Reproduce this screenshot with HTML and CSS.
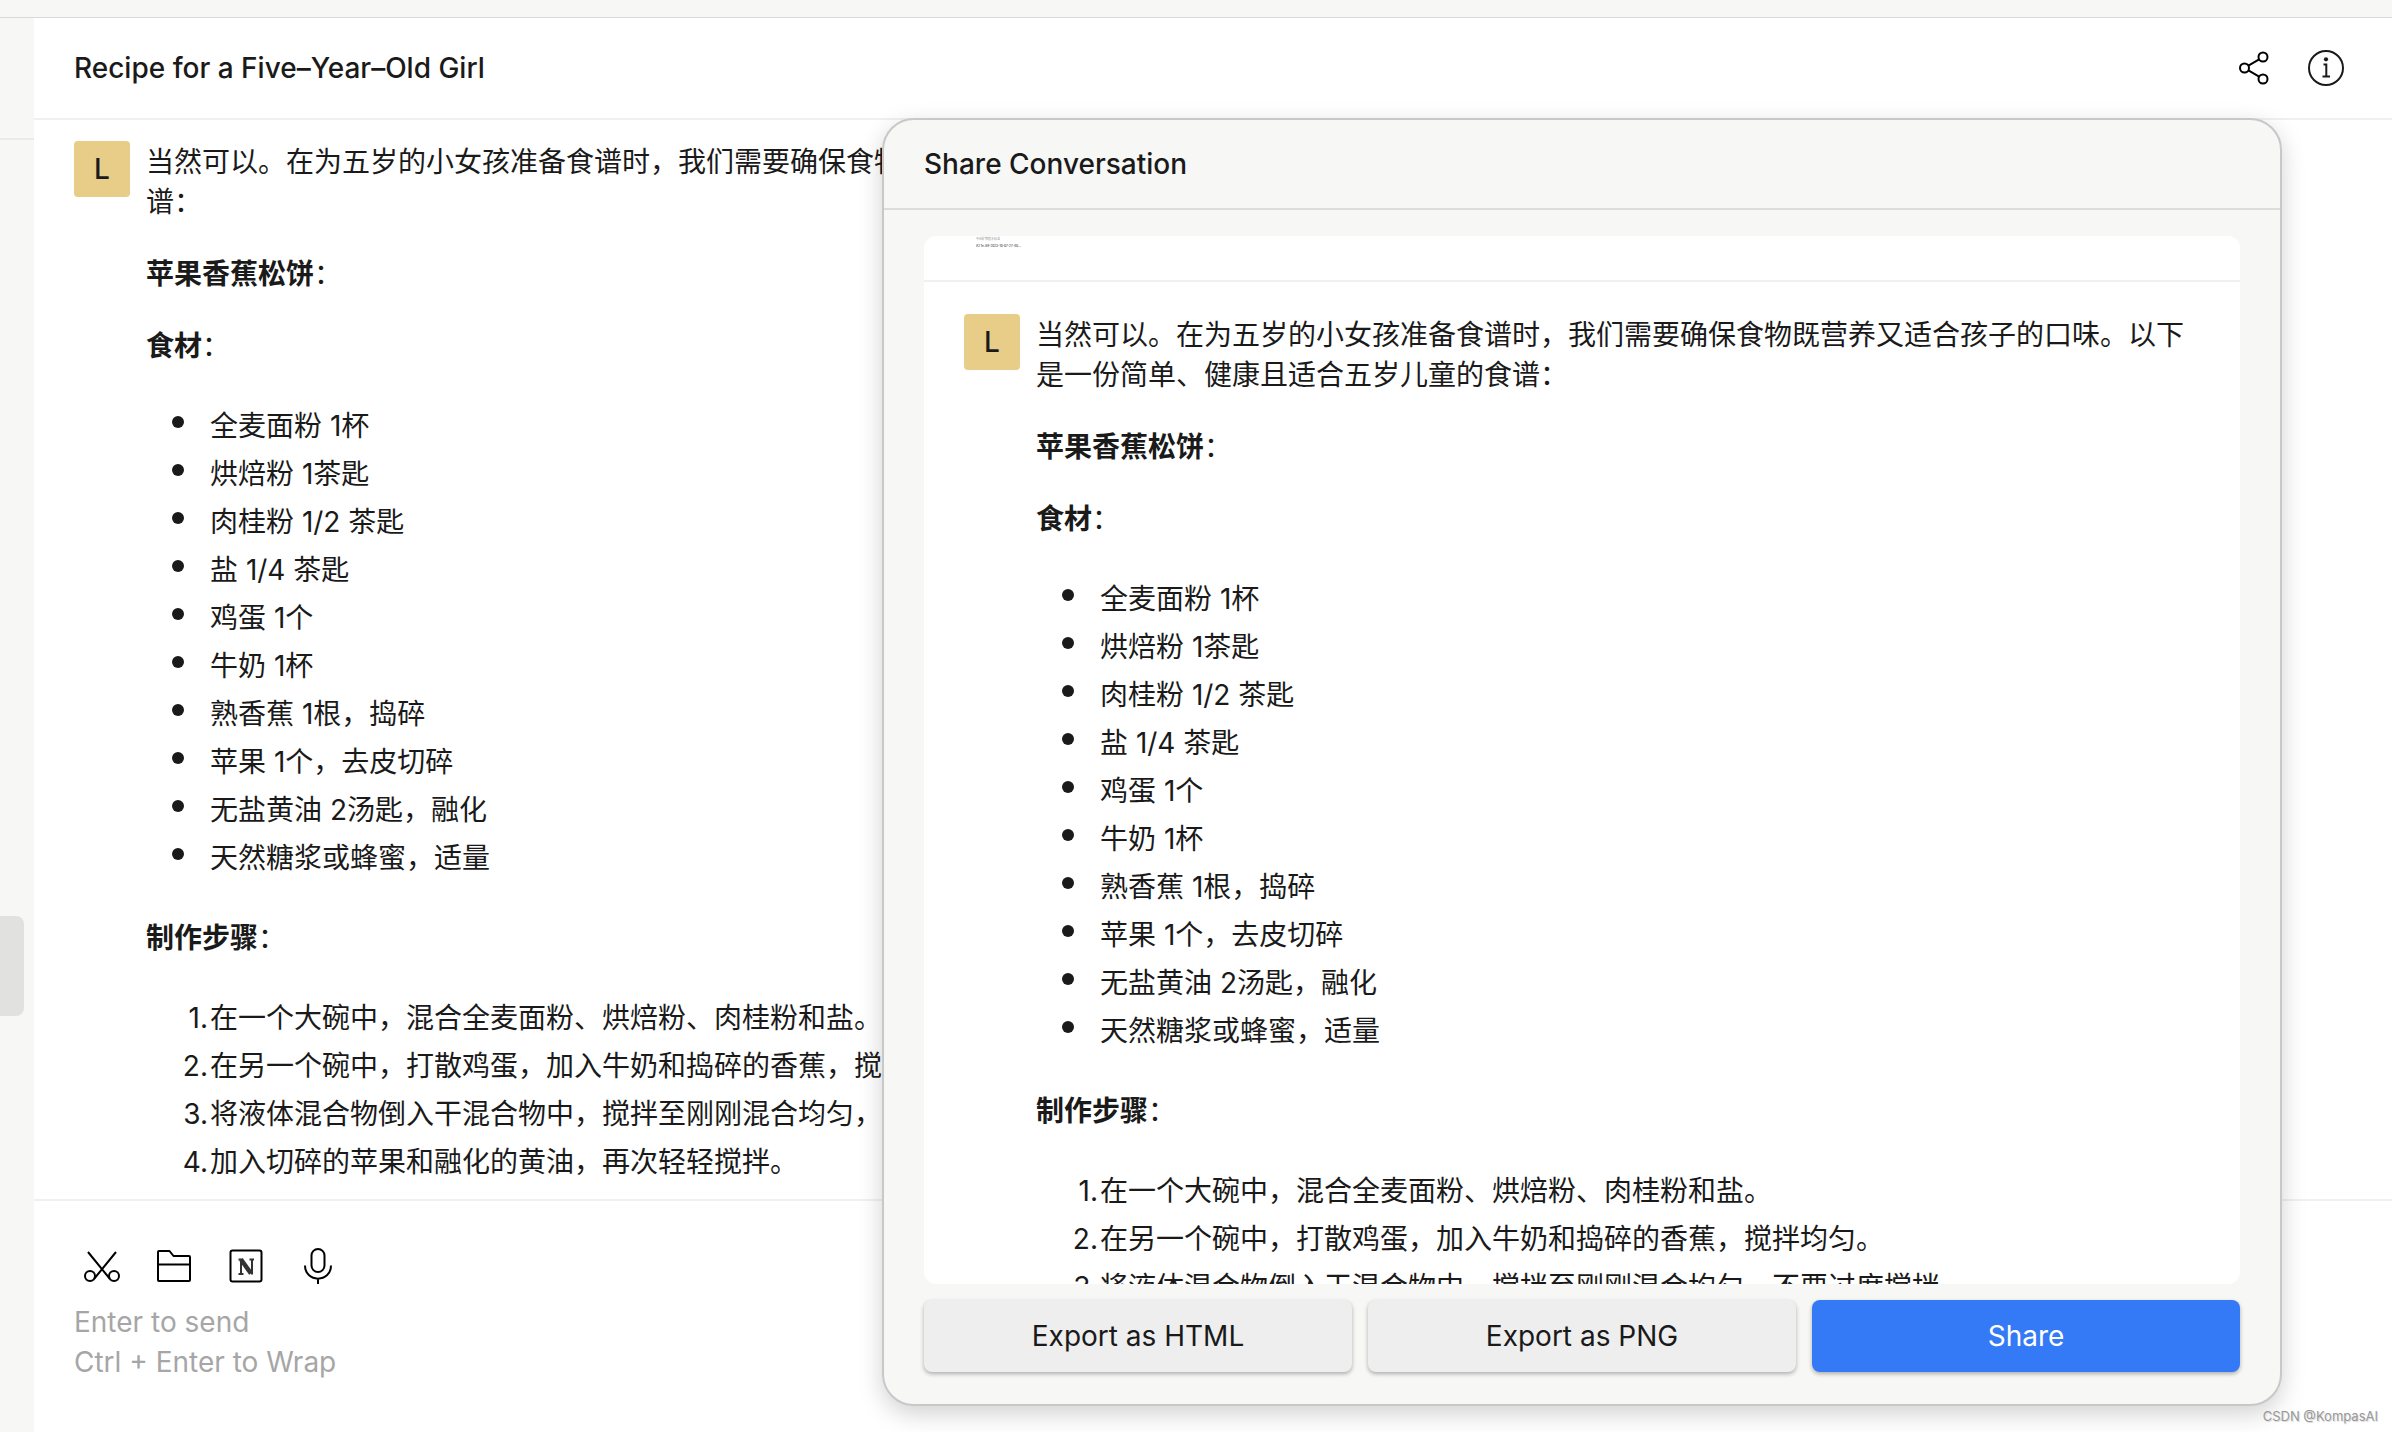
FILE: index.html
```html
<!DOCTYPE html>
<html lang="zh-CN">
<head>
<meta charset="utf-8">
<title>Recipe for a Five-Year-Old Girl</title>
<link rel="stylesheet" href="styles.css">
</head>
<body>
<div class="app">
  <div class="titlebar"></div>
  <div class="workspace">
    <aside class="sidebar">
      <div class="sidebar-head"></div>
      <div class="sidebar-item"></div>
    </aside>
    <main class="main">
      <header class="chat-header">
        <h1 class="title">Recipe for a Five–Year–Old Girl</h1>
        <button class="icon-button" type="button" aria-label="Share">
          <svg viewBox="0 0 36 36" fill="none" stroke="#000" stroke-width="2"><circle cx="8.500" cy="18" r="4.500"/><circle cx="27" cy="7" r="4.500"/><circle cx="27" cy="29" r="4.500"/><path d="M12.400 15.700 23.100 9.300M12.400 20.300 23.100 26.700"/></svg>
        </button>
        <button class="icon-button" type="button" aria-label="Info">
          <svg viewBox="0 0 36 36" fill="none" stroke="#1a1a1a" stroke-width="2"><circle cx="18" cy="18" r="17"/><circle cx="18" cy="9.300" r="2.100" fill="#1a1a1a" stroke="none"/><path d="M15.500 14.500H18.300V26.500M14.500 26.500H22"/></svg>
        </button>
      </header>

      <section class="chat">
        <article class="message">
          <div class="avatar">L</div>
          <div class="text">
            <p>当然可以。在为五岁的小女孩准备食谱时，我们需要确保食物既营养又适合孩子的口味。以下是一份简单、健康且适合五岁儿童的食谱：</p>
            <p><strong>苹果香蕉松饼</strong>：</p>
            <p><strong>食材</strong>：</p>
            <ul>
              <li>全麦面粉 1杯</li>
              <li>烘焙粉 1茶匙</li>
              <li>肉桂粉 1/2 茶匙</li>
              <li>盐 1/4 茶匙</li>
              <li>鸡蛋 1个</li>
              <li>牛奶 1杯</li>
              <li>熟香蕉 1根，捣碎</li>
              <li>苹果 1个，去皮切碎</li>
              <li>无盐黄油 2汤匙，融化</li>
              <li>天然糖浆或蜂蜜，适量</li>
            </ul>
            <p><strong>制作步骤</strong>：</p>
            <ol>
              <li>在一个大碗中，混合全麦面粉、烘焙粉、肉桂粉和盐。</li>
              <li>在另一个碗中，打散鸡蛋，加入牛奶和捣碎的香蕉，搅拌均匀。</li>
              <li>将液体混合物倒入干混合物中，搅拌至刚刚混合均匀，不要过度搅拌。</li>
              <li>加入切碎的苹果和融化的黄油，再次轻轻搅拌。</li>
            </ol>
          </div>
        </article>
      </section>

      <form class="composer">
        <div class="tools">
          <button class="icon-button" type="button" aria-label="Screenshot">
            <svg viewBox="0 0 36 36" fill="none" stroke="#000" stroke-width="2"><circle cx="6" cy="28" r="5"/><circle cx="30" cy="28" r="5"/><path d="M4 4 26 31M32 4 10 31" /></svg>
          </button>
          <button class="icon-button" type="button" aria-label="Open file">
            <svg viewBox="0 0 36 36" fill="none" stroke="#000" stroke-width="2" stroke-linejoin="round"><path d="M2 4Q2 3 3 3H13.500L17.500 8H33Q34 8 34 9V32Q34 33 33 33H3Q2 33 2 32ZM2 16.500H34"/></svg>
          </button>
          <button class="icon-button" type="button" aria-label="Notion">
            <svg viewBox="0 0 36 36" fill="none" stroke="#000" stroke-width="2"><rect x="2.500" y="2.500" width="31" height="31" rx="2"/><path d="M10.500 11.500H15M21.500 11.500H26M13 11V25.500M24 11.500V26.500M10.500 26H15.500" stroke="#333"/><path d="M13 11.500 23 25.500" stroke="#333" stroke-width="4.500"/></svg>
          </button>
          <button class="icon-button" type="button" aria-label="Voice input">
            <svg viewBox="0 0 36 36" fill="none" stroke="#000" stroke-width="2"><rect x="11.500" y="1" width="13" height="23" rx="6.500"/><path d="M5 17.500C5 35 31 35 31 17.500M18 30.500V36"/></svg>
          </button>
        </div>
        <textarea class="input" rows="2" aria-label="Message" placeholder="Enter to send&#10;Ctrl + Enter to Wrap"></textarea>
      </form>
    </main>
  </div>
</div>

<div class="dialog" role="dialog" aria-labelledby="share-title">
  <h2 class="dialog-title" id="share-title">Share Conversation</h2>
  <div class="dialog-body">
    <div class="preview">
      <div class="previous">
        <p>中国矿物质水标准</p>
        <p class="file">A2 1e-69-2023-10-07-27-40…</p>
      </div>
      <article class="message">
        <div class="avatar">L</div>
        <div class="text">
          <p>当然可以。在为五岁的小女孩准备食谱时，我们需要确保食物既营养又适合孩子的口味。以下是一份简单、健康且适合五岁儿童的食谱：</p>
          <p><strong>苹果香蕉松饼</strong>：</p>
          <p><strong>食材</strong>：</p>
          <ul>
            <li>全麦面粉 1杯</li>
            <li>烘焙粉 1茶匙</li>
            <li>肉桂粉 1/2 茶匙</li>
            <li>盐 1/4 茶匙</li>
            <li>鸡蛋 1个</li>
            <li>牛奶 1杯</li>
            <li>熟香蕉 1根，捣碎</li>
            <li>苹果 1个，去皮切碎</li>
            <li>无盐黄油 2汤匙，融化</li>
            <li>天然糖浆或蜂蜜，适量</li>
          </ul>
          <p><strong>制作步骤</strong>：</p>
          <ol>
            <li>在一个大碗中，混合全麦面粉、烘焙粉、肉桂粉和盐。</li>
            <li>在另一个碗中，打散鸡蛋，加入牛奶和捣碎的香蕉，搅拌均匀。</li>
            <li>将液体混合物倒入干混合物中，搅拌至刚刚混合均匀，不要过度搅拌。</li>
          </ol>
        </div>
      </article>
    </div>
    <div class="actions">
      <button class="button" type="button">Export as HTML</button>
      <button class="button" type="button">Export as PNG</button>
      <button class="button primary" type="button">Share</button>
    </div>
  </div>
</div>
<div class="watermark">CSDN @KompasAI</div>
</body>
</html>
```
FILE: styles.css
```css
* { box-sizing: border-box; }

body {
  margin: 0;
  background: #f7f7f5;
  color: #1a1a1a;
  font-family: Inter, "Noto Sans CJK SC", sans-serif;
  font-size: 28px;
  line-height: 40px;
}

h1, h2, p, ul, ol { margin: 0; padding: 0; }

button, textarea { font: inherit; color: inherit; }

.app {
  display: flex;
  flex-direction: column;
  height: 100vh;
  overflow: hidden;
}

.titlebar {
  flex: none;
  height: 18px;
  border-bottom: 1px solid #d9d9d9;
}

.workspace {
  display: flex;
  flex: 1;
  min-height: 0;
}

.sidebar { flex: none; width: 34px; }

.sidebar-head {
  height: 122px;
  border-bottom: 2px solid #ebebea;
}

.sidebar-item {
  height: 100px;
  margin: 776px 10px 0 0;
  border-radius: 0 8px 8px 0;
  background: #e1e1e0;
}

.main {
  display: flex;
  flex: 1;
  flex-direction: column;
  min-width: 0;
  background: #fff;
}

.chat-header {
  display: flex;
  flex: none;
  align-items: center;
  gap: 36px;
  height: 102px;
  padding: 0 48px 0 40px;
  border-bottom: 2px solid #f0f0f0;
}

.title {
  flex: 1;
  font-size: 28px;
  font-weight: 500;
}

.icon-button {
  width: 36px;
  height: 36px;
  padding: 0;
  border: 0;
  background: none;
}

.icon-button svg { display: block; width: 36px; height: 36px; }

.chat {
  flex: 1;
  min-height: 0;
  overflow: hidden;
  padding: 21px 40px 0;
}

.message {
  display: flex;
  align-items: flex-start;
  gap: 16px;
}

.chat .message { max-width: 75%; }

.avatar {
  flex: none;
  width: 56px;
  border-radius: 4px;
  background: #e8cd89;
  font-weight: 500;
  line-height: 56px;
  text-align: center;
}

.text {
  display: flex;
  flex: 1;
  flex-direction: column;
  gap: 32px;
  padding-top: 1px;
}

.text strong { font-weight: 700; }

.text ul, .text ol {
  display: flex;
  flex-direction: column;
  gap: 8px;
  padding: 8px 0 8px 64px;
  list-style: none;
  counter-reset: step;
}

.text li { display: flex; }

.text ul li::before {
  content: "";
  width: 12px;
  height: 12px;
  margin: 10px 26px 0 -38px;
  border-radius: 50%;
  background: #1a1a1a;
}

.text ol li::before {
  counter-increment: step;
  content: counter(step) ".";
  width: 38px;
  margin-left: -40px;
  padding-right: 2px;
  text-align: right;
}

.composer {
  display: flex;
  flex: none;
  flex-direction: column;
  gap: 18px;
  padding: 47px 40px 50px;
  border-top: 2px solid #f0f0f0;
}

.tools { display: flex; gap: 36px; padding-left: 10px; }

.input {
  display: block;
  width: 100%;
  height: 80px;
  padding: 0;
  border: 0;
  outline: 0;
  background: none;
  resize: none;
}

.input::placeholder { color: #a6a6a6; opacity: 1; }

.dialog {
  position: absolute;
  top: 118px;
  right: 110px;
  bottom: 26px;
  display: flex;
  flex-direction: column;
  width: 1400px;
  max-width: 90%;
  overflow: hidden;
  border: 2px solid #c8c8c8;
  border-radius: 32px;
  background: #f7f7f5;
  box-shadow: 0 8px 24px rgba(0, 0, 0, 0.18);
}

.dialog-title {
  flex: none;
  padding: 24px 40px;
  border-bottom: 2px solid #dcdcdb;
  font-size: 28px;
  font-weight: 500;
}

.dialog-body {
  display: flex;
  flex: 1;
  flex-direction: column;
  gap: 16px;
  min-height: 0;
  padding: 26px 40px 32px;
}

.preview {
  flex: 1;
  min-height: 0;
  overflow: hidden;
  border-radius: 12px;
  background: #fff;
}

.previous {
  height: 46px;
  padding-left: 52px;
  border-bottom: 2px solid #f0f0f0;
  color: #999;
  font-size: 3px;
  line-height: 7px;
}

.previous .file { color: #555; font-weight: 600; }

.preview .message { padding: 32px 40px 0; }

.actions {
  display: grid;
  flex: none;
  grid-template-columns: repeat(3, 1fr);
  gap: 16px;
}

.button {
  height: 72px;
  padding: 0;
  border: 0;
  border-radius: 8px;
  background: #eee;
  box-shadow: 0 2px 4px rgba(0, 0, 0, 0.3);
}

.button.primary { background: #347af6; color: #fff; }

.watermark {
  position: absolute;
  right: 14px;
  bottom: 6px;
  color: #999;
  font-size: 13px;
  line-height: 20px;
  text-shadow: 1px 1px 0 #ddd;
}
```
